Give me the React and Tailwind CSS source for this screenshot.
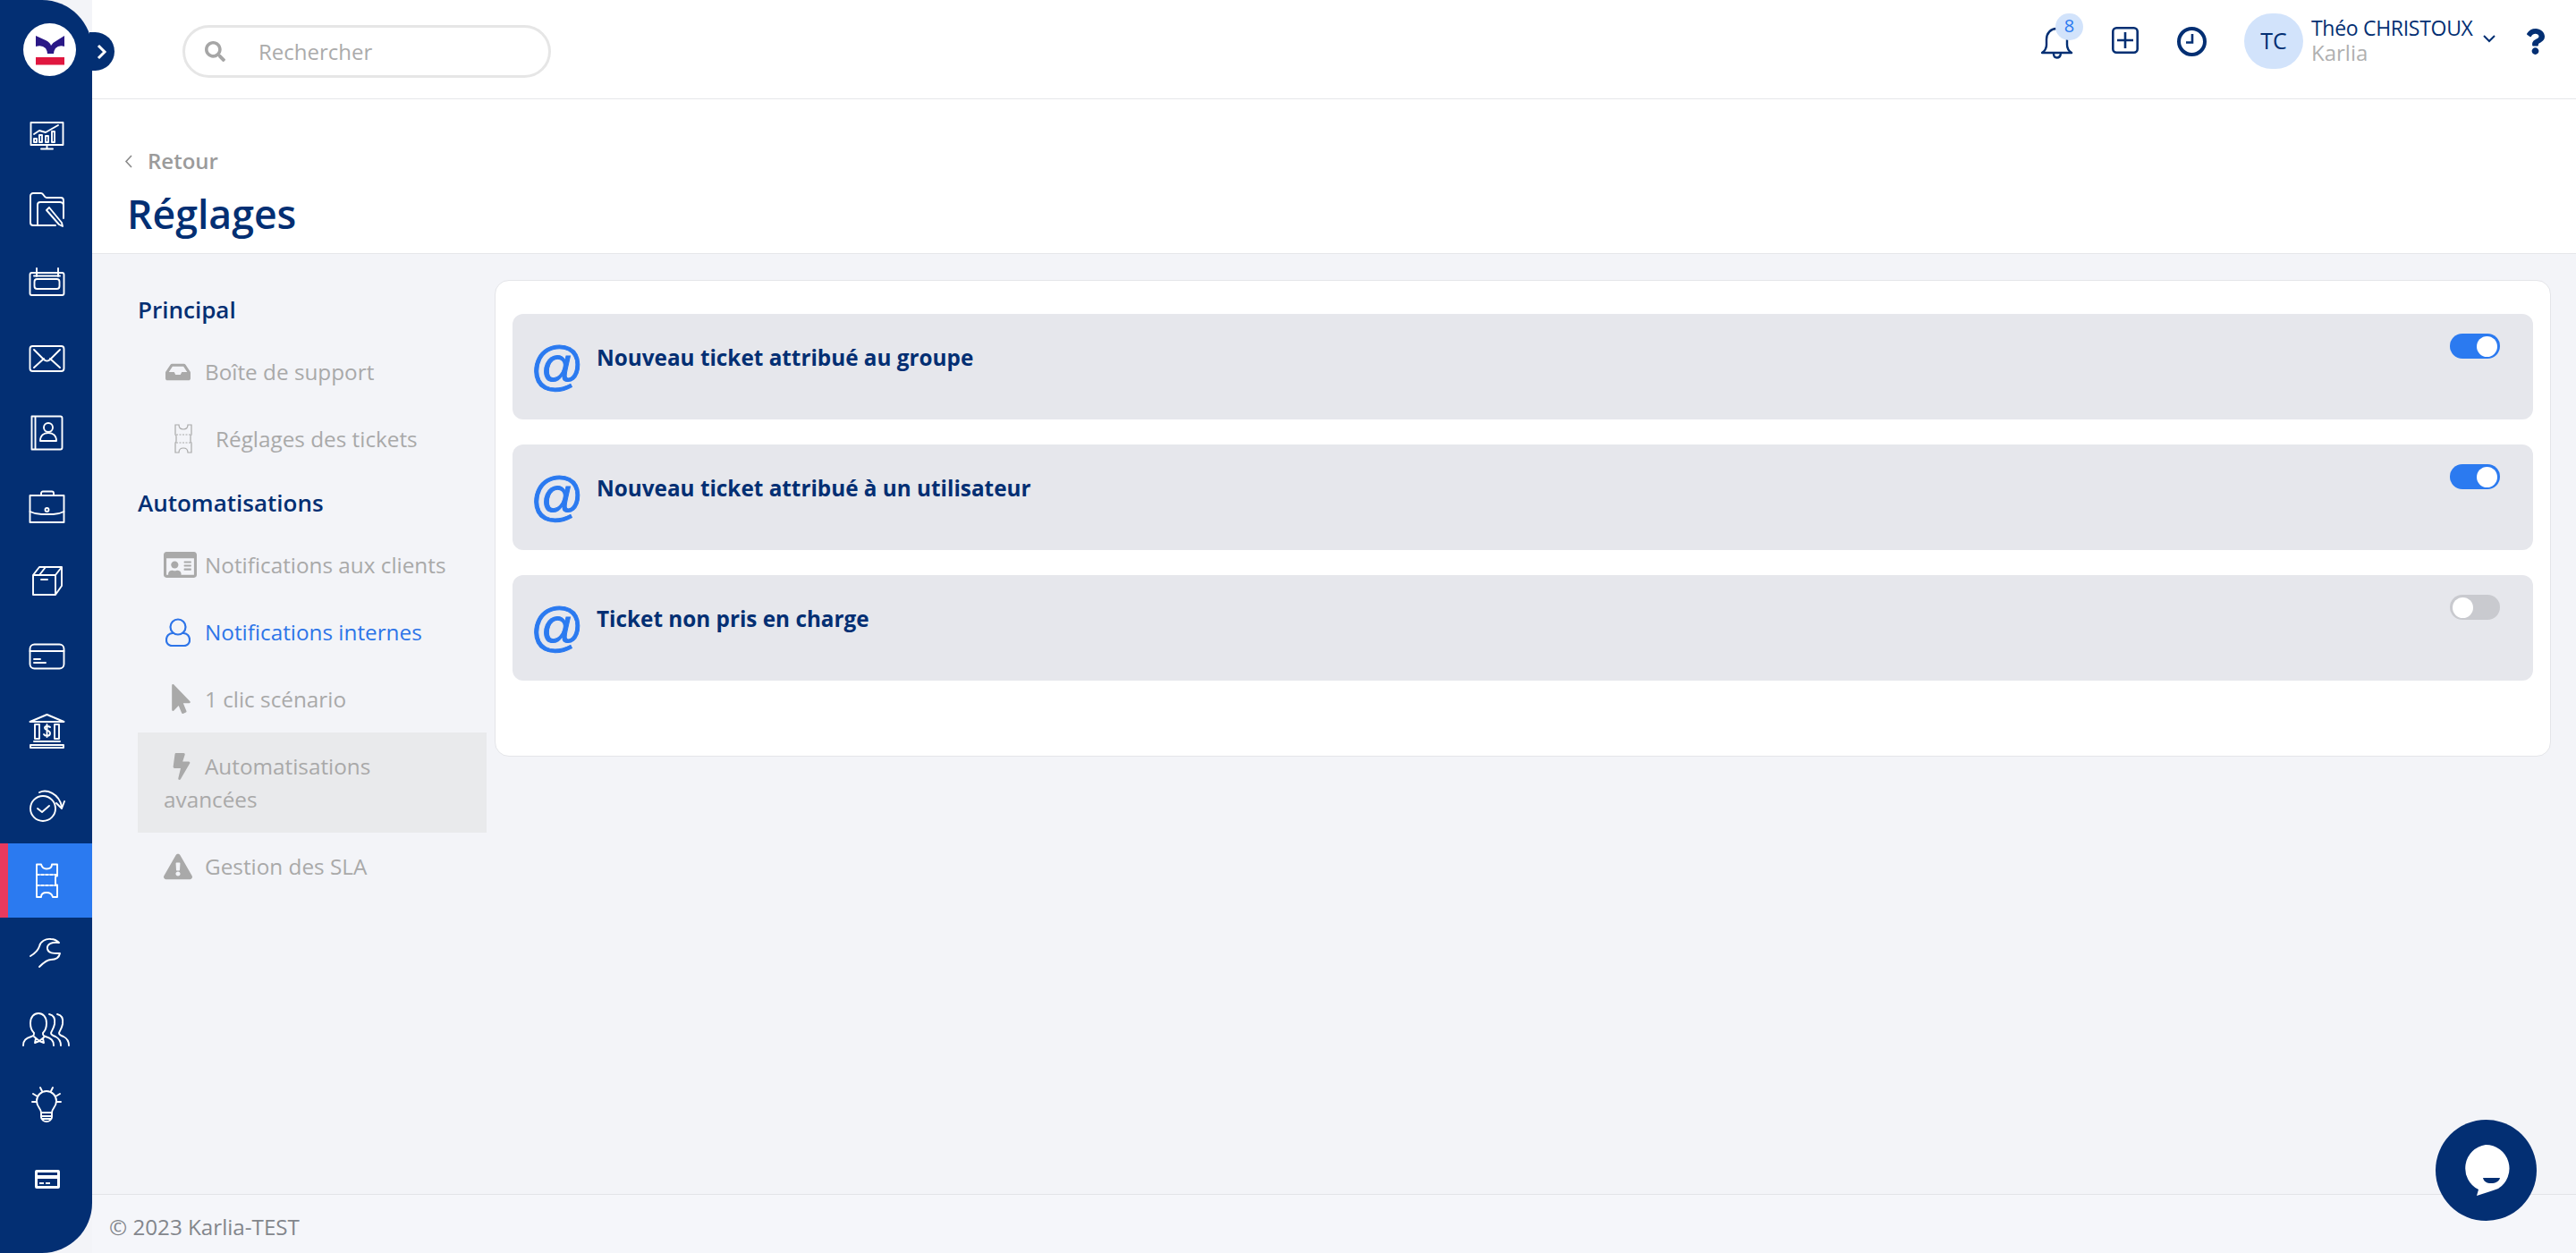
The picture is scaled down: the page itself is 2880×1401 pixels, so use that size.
import React from 'react';
import { FaInbox, FaRegIdCard, FaMousePointer, FaBolt, FaExclamationTriangle, FaSearch, FaQuestion } from 'react-icons/fa';

// sidebar icons are drawn in a 56x40 box, stroke only
const navIcons = [
  <g>
    <rect x="10.500" y="6" width="36" height="25" />
    <path d="M28.500 31v4M22 35.500h13M14 19l6-4 7 2 14-8" />
    <rect x="14" y="24" width="3" height="4" />
    <rect x="20" y="20" width="3" height="8" />
    <rect x="27" y="21" width="3" height="7" />
    <rect x="34" y="16" width="3" height="12" />
  </g>,
  <g>
    <path d="M18 38h-5a3 3 0 0 1-3-3V5a3 3 0 0 1 3-3h9c3 0 3 5 6 5h16a3 3 0 0 1 3 3v20" />
    <path d="M18 38V15a3 3 0 0 1 3-3h22a4 4 0 0 1 4 4v12M18 38h20" />
    <path d="M28 21l3-3 14 17 1 4-4-2z" />
  </g>,
  <g>
    <rect x="9.500" y="8" width="38" height="25" rx="2" />
    <path d="M17 3v9M41 3v9M14 11.500h29" />
    <rect x="14.500" y="15" width="28" height="11" rx="3" />
  </g>,
  <g>
    <rect x="9.500" y="6" width="38" height="28" rx="3" />
    <path d="M14 10l11 11c2 2 5 2 7 0l11-11M14 30l11-10M43 30L32 20" />
  </g>,
  <g>
    <path d="M11.500 1.500v37M11.500 1.500h32a2 2 0 0 1 2 2v33a2 2 0 0 1-2 2h-32M15.500 1.500v37" />
    <circle cx="30" cy="14" r="5" />
    <path d="M21 29c0-6 4-9 9-9s9 3 9 9z" />
  </g>,
  <g>
    <rect x="9.500" y="6" width="38" height="30" />
    <path d="M22 6V3.500a2 2 0 0 1 2-2h10a2 2 0 0 1 2 2V6M9.500 24c4 2 8 3 13 3h13c5 0 8-1 12-3" />
    <circle cx="28.500" cy="22" r="2" />
  </g>,
  <g>
    <path d="M13 12h25v22H13zM13 12l7-9h25l-7 9M38 34l7-10V3M27 3l-7 9" />
    <path d="M22 17h7" />
  </g>,
  <g>
    <rect x="9.500" y="6.500" width="38" height="27" rx="5" />
    <path d="M9.500 14h38M14 23h7M14 27h13" />
  </g>,
  <g>
    <path d="M9.500 9l19-8 19 8zM15 12h5v16h-5zM37 12h5v16h-5zM14 31h29M10 35h37v3H10z" />
    <path d="M32 15c-1-1-6-2-6 1s6 2 6 6-6 3-7 1M28.500 12v14" />
  </g>,
  <g>
    <circle cx="24" cy="23" r="14" />
    <path d="M18 23l5 4 8-7M20 5c8-4 22 1 25 16M39 17l6 6 3-8" />
  </g>,
  <g>
    <path d="M17 1.500h5c1 4 3 5 6 5s6-1 6-5h6v13c-2 0-2 0-2 2v6c0 2 0 2 2 2v13.500h-5c-1-4-4-5-7-5s-6 1-6 5h-5z" />
    <path d="M17 13h23M17 25h23" strokeDasharray="3 2" />
  </g>,
  <g>
    <path d="M10 21c5-3 9-7 10-11 1-5 7-9 13-8 4 0 7 2 9 4-7-1-14 1-13 7 1 5 6 5 14 5-1 5-4 7-10 7-5 0-9 4-13 8" />
  </g>,
  <g>
    <path d="M2 38c0-6 3-8 9-10 3-1 3-2 3-4-3-3-4-7-4-11 0-7 4-11 9-11s9 4 9 11c0 4-1 8-4 11 0 2 0 3 3 4 6 2 9 4 9 10" />
    <path d="M14 28l6 5 6-5M16 30l-1 5 5-2 5 2-1-5" />
    <path d="M31 3c5 1 7 5 6 11-1 5-3 7-4 10 0 2 2 3 5 4 4 2 6 5 6 10" />
    <path d="M40 3c5 1 7 5 6 11-1 5-3 7-4 10 0 2 2 3 5 4 4 2 6 5 6 10" />
  </g>,
  <g>
    <path d="M22 29c0-5-5-6-5-13a11 11 0 0 1 22 0c0 7-5 8-5 13zM22 29v5c0 3 3 5 6 5s6-2 6-5v-5M22 33h12M23 36h10" />
    <path d="M12 17h5M39 17h5M13 8l5 3M43 8l-5 3M21 1l2 4M35 1l-2 4" />
  </g>,
  <g fill="#fff" stroke="none">
    <path fillRule="evenodd" d="M17 10h24a2 2 0 0 1 2 2v17a2 2 0 0 1-2 2H17a2 2 0 0 1-2-2V12a2 2 0 0 1 2-2zm1 3v3h22v-3zm0 7v8h22v-8zm2 4h5v2h-5zm7 0h5v2h-5z" />
  </g>,
];

function NavIcon({ children }) {
  return (
    <svg width="56" height="40" viewBox="0 0 56 40" fill="none" stroke="#fff" strokeWidth="1.900" strokeLinecap="round" strokeLinejoin="round">
      {children}
    </svg>
  );
}

function Sidebar() {
  return (
    <aside className="relative z-10 w-[103px] h-full shrink-0 bg-[#032f73] rounded-r-[56px]">
      <div className="h-[109px] pt-[26px] pl-[26px]">
        <svg width="59" height="59" viewBox="0 0 59 59">
          <circle cx="29.500" cy="29.500" r="29.500" fill="#fff" />
          <path d="M14 14l11 5q5 2.500 6 6 2-3.500 7-6l8-5v12q-6-2-10 2-2 3-2 6h-7q0-3-2-6-4-4-11-2z" fill="#2a1886" />
          <rect x="14" y="38" width="32" height="8.500" fill="#e0173f" />
        </svg>
      </div>
      <div className="absolute left-[100px] top-[36px] w-[28px] h-[43px] rounded-r-full bg-[#032f73] flex items-center justify-center">
        <svg width="12" height="18" viewBox="0 0 12 18" fill="none" stroke="#fff" strokeWidth="3"><path d="M2 2l7 7-7 7" /></svg>
      </div>
      <nav>
        {navIcons.map((icon, i) => (
          <div
            key={i}
            className={i === 10
              ? 'h-[83.4px] flex items-center justify-center bg-[#2b7af0] border-l-[9px] border-[#e93a5e] pr-[9px]'
              : 'h-[83.4px] flex items-center justify-center'}
          >
            <NavIcon>{icon}</NavIcon>
          </div>
        ))}
      </nav>
    </aside>
  );
}

function Topbar() {
  return (
    <header className="h-[111px] shrink-0 bg-white border-b border-[#e6e7ea] flex justify-between items-start">
      <div className="ml-[101px] mt-[28px] w-[412px] h-[59px] rounded-full border-[3px] border-[#e6e6e6] flex items-center pl-[22px]">
        <FaSearch className="text-[#a6a6a6] text-[23px]" />
        <input placeholder="Rechercher" className="ml-[37px] w-[300px] outline-none text-[24px] placeholder:text-[#ababab]" />
      </div>
      <div className="flex items-start pt-[15px] pr-[31px] text-[#032f73]">
        <div className="relative mt-[15px] w-[47px] h-[36px]">
          <svg width="36" height="37" viewBox="0 0 36 37" fill="none" stroke="#032f73" strokeWidth="2.400" strokeLinejoin="round">
            <path d="M1 29c3-2 5-4 5-9v-6C6 7 11 2 17 2s12 5 12 12v6c0 5 2 7 5 9z" />
            <path d="M14 30c0 6 7 6 8 0" />
          </svg>
          <span className="absolute left-[16px] top-[-15px] w-[31px] h-[30px] rounded-full bg-[#d2e3fb] text-[#2b7af0] text-[20px] leading-[28px] text-center">8</span>
        </div>
        <svg className="ml-[32px] mt-[15px]" width="30" height="30" viewBox="0 0 30 30" fill="none" stroke="#032f73" strokeWidth="2.600">
          <rect x="1.300" y="1.300" width="27.400" height="27.400" rx="4" />
          <path d="M15 6v18M6 15h18" />
        </svg>
        <svg className="ml-[43px] mt-[15px]" width="33" height="33" viewBox="0 0 33 33" fill="none" stroke="#032f73">
          <circle cx="16.500" cy="16.500" r="14.500" strokeWidth="4" />
          <path d="M17 8v9.500H10" strokeWidth="2.600" />
        </svg>
        <div className="ml-[42px] w-[66px] h-[62px] rounded-full bg-[#d2e3fb] flex items-center justify-center text-[25px] font-medium">TC</div>
        <div className="ml-[9px] w-[192px] leading-[27px] pt-[3px]">
          <div className="text-[23px] tracking-[-0.3px] whitespace-nowrap">Théo CHRISTOUX</div>
          <div className="text-[24px] text-[#b0b0b0]">Karlia</div>
        </div>
        <svg className="mt-[24px]" width="14" height="9" viewBox="0 0 14 9" fill="none" stroke="#032f73" strokeWidth="2"><path d="M1 1l6 6 6-6" /></svg>
        <FaQuestion className="ml-[30px] mt-[17px] text-[29px]" />
      </div>
    </header>
  );
}

function TicketIcon() {
  return (
    <svg width="20" height="33" viewBox="0 0 20 33" fill="none" stroke="#a9a9a9" strokeWidth="1.200">
      <path d="M1 1h4c0 3 2 5 5 5s5-2 5-5h4v11c-1 0-1 1-1 2v5c0 1 0 2 1 2v11h-4c0-3-2-5-5-5s-5 2-5 5H1V21c1 0 1-1 1-2v-5c0-1 0-2-1-2z" />
      <path d="M2 12h16M2 21h16" strokeDasharray="2 1.500" />
    </svg>
  );
}

function UserIcon() {
  return (
    <svg width="28" height="32" viewBox="0 0 28 32" fill="none" stroke="#2d74e8" strokeWidth="2.200">
      <circle cx="14" cy="10" r="8.500" />
      <path d="M9 17H8a7 7 0 0 0-7 7v1a6 6 0 0 0 6 6h14a6 6 0 0 0 6-6v-1a7 7 0 0 0-7-7h-1" />
    </svg>
  );
}

const menu = [
  { title: 'Principal' },
  { label: 'Boîte de support', icon: <FaInbox className="text-[28px] text-[#a9a9a9]" />, ml: 'ml-[2px] w-[44px]' },
  { label: 'Réglages des tickets', icon: <TicketIcon />, ml: 'ml-[12px] w-[46px]' },
  { title: 'Automatisations' },
  { label: 'Notifications aux clients', icon: <FaRegIdCard className="text-[37px] text-[#a9a9a9]" />, ml: 'w-[46px]' },
  { label: 'Notifications internes', icon: <UserIcon />, ml: 'ml-[2px] w-[44px]', active: true },
  { label: '1 clic scénario', icon: <FaMousePointer className="text-[33px] text-[#a9a9a9]" />, ml: 'ml-[3px] w-[43px]' },
  { label: 'Automatisations avancées', icon: <FaBolt className="text-[30px] text-[#a9a9a9]" />, ml: 'ml-[5px] w-[41px]', hover: true },
  { label: 'Gestion des SLA', icon: <FaExclamationTriangle className="text-[32px] text-[#a9a9a9]" />, ml: 'w-[46px]' },
];

function SideMenu() {
  return (
    <div className="w-[390px] ml-[51px] shrink-0 pt-[28px]">
      {menu.map((m) => m.title ? (
        <div key={m.title} className="pt-[16px] pb-[14px] text-[26px] leading-[36px] font-semibold text-[#032f73]">{m.title}</div>
      ) : (
        <div
          key={m.label}
          className={(m.active ? 'text-[#2d74e8] ' : 'text-[#a9a9a9] ') + (m.hover ? 'bg-[#e9eaec] ' : '') + 'py-[19px] pl-[29px] pr-[40px] text-[24.3px] leading-[37px]'}
        >
          <span className={m.ml + ' inline-flex items-center h-[37px] align-top'}>{m.icon}</span>
          {m.label}
        </div>
      ))}
    </div>
  );
}

const rows = [
  { label: 'Nouveau ticket attribué au groupe', on: true },
  { label: 'Nouveau ticket attribué à un utilisateur', on: true },
  { label: 'Ticket non pris en charge', on: false },
];

function Toggle({ on }) {
  return (
    <div className={(on ? 'bg-[#2b7af0] justify-end' : 'bg-[#c9cacf] justify-start') + ' w-[56px] h-[28px] mt-[22px] rounded-full flex items-center px-[3px]'}>
      <div className="w-[23px] h-[23px] rounded-full bg-white" />
    </div>
  );
}

function SettingsCard() {
  return (
    <section className="mt-[29px] ml-[9px] mr-[28px] flex-1 h-[533px] bg-white rounded-[16px] border border-[#e4e5e9] pt-[37px] px-[19px] flex flex-col gap-[28px]">
      {rows.map((r) => (
        <div key={r.label} className="h-[118px] bg-[#e6e7ec] rounded-[12px] flex justify-between items-start pl-[20px] pr-[37px]">
          <div className="flex items-start">
            <span className="mt-[25px] w-[74px] font-['Liberation_Sans',sans-serif] text-[59px] leading-[66px] text-[#2b7af0] [-webkit-text-stroke:1px_#2b7af0]">@</span>
            <span className="mt-[31px] text-[24.3px] leading-[36px] font-bold text-[#032f73]">{r.label}</span>
          </div>
          <Toggle on={r.on} />
        </div>
      ))}
    </section>
  );
}

export default function App() {
  return (
    <div className="relative flex h-screen w-full overflow-hidden bg-[#f3f4f8] font-['Open_Sans',sans-serif]">
      <Sidebar />
      <main className="flex-1 flex flex-col min-w-0">
        <Topbar />
        <div className="h-[173px] shrink-0 bg-white border-b border-[#e6e7ea] pl-[36px]">
          <div className="flex items-center mt-[51px] h-[36px] text-[#9b9b9b]">
            <svg width="9" height="15" viewBox="0 0 9 15" fill="none" stroke="#8a8a8a" strokeWidth="1.600"><path d="M8 1L2 7.500 8 14" /></svg>
            <span className="ml-[17px] text-[24px] font-semibold">Retour</span>
          </div>
          <h1 className="ml-[3px] mt-[11px] text-[44.6px] leading-[60px] font-semibold text-[#032f73]">Réglages</h1>
        </div>
        <div className="flex-1 flex items-start min-h-0">
          <SideMenu />
          <SettingsCard />
        </div>
        <footer className="h-[66px] shrink-0 bg-[#f5f6fa] border-t border-[#e3e4e8] pl-[19px] pt-[8px] flex items-center text-[24.2px] text-[#83868c]">
          © 2023 Karlia-TEST
        </footer>
      </main>
      <button className="absolute left-[2723px] top-[1252px] w-[113px] h-[113px] rounded-full bg-[#032f73]">
        <svg width="113" height="113" viewBox="0 0 113 113">
          <path d="M56 28a26.500 26.500 0 0 1 14 49c-7 3-16 5-24 8l2-7a26.500 26.500 0 0 1 8-50z" fill="#fff" />
          <path d="M53 65h19c-1 4-5 6-10 6s-8-2-9-6z" fill="#032f73" />
        </svg>
      </button>
    </div>
  );
}
